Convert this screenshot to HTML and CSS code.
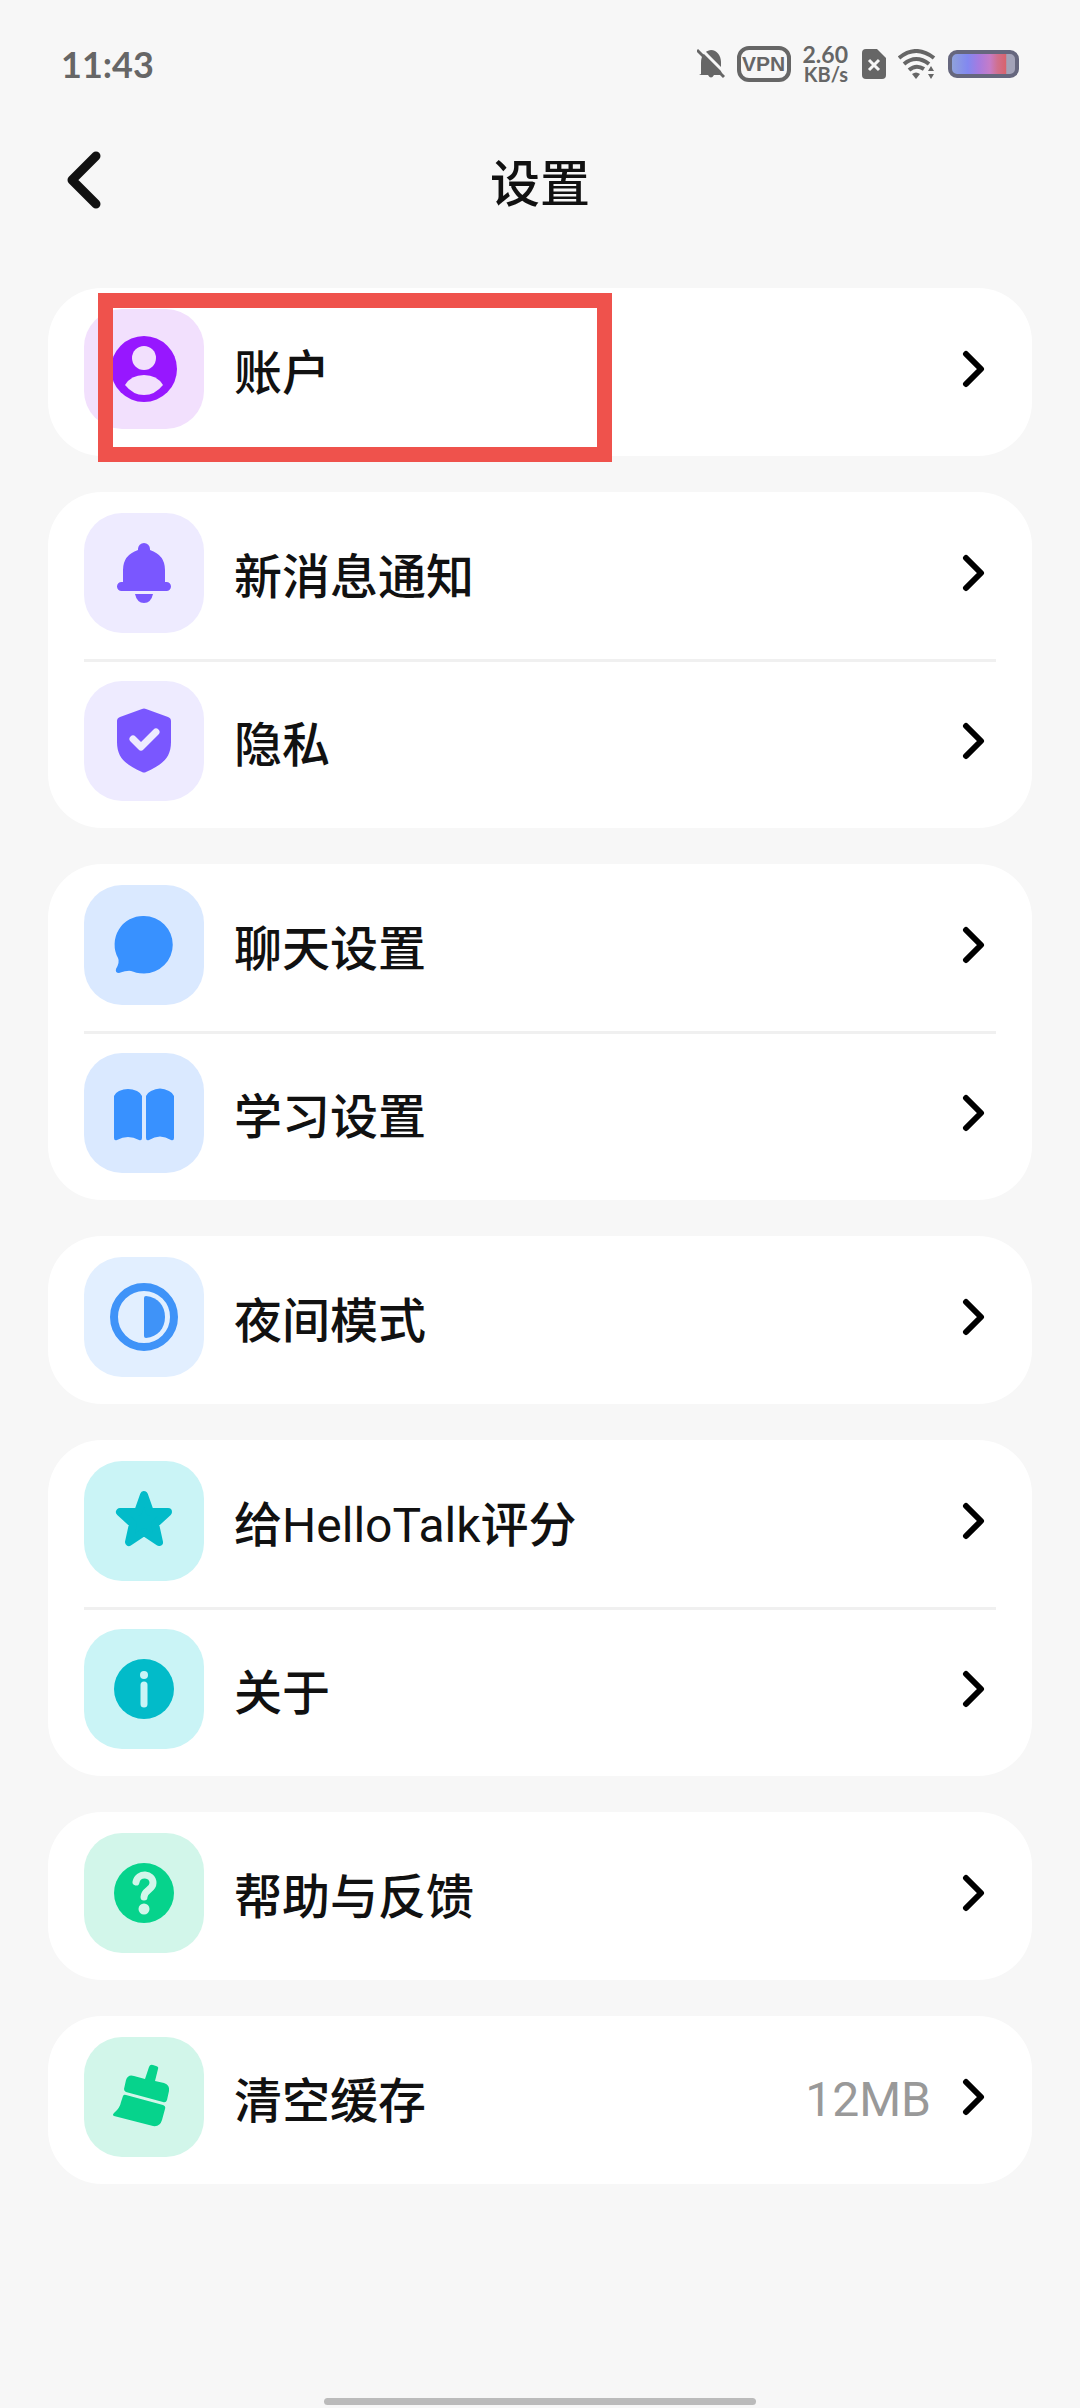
FILE: index.html
```html
<!DOCTYPE html>
<html lang="zh-CN">
<head>
  <meta charset="UTF-8">
  <meta name="viewport" content="width=device-width, initial-scale=1.0">
  <title>设置</title>
  <link rel="stylesheet" href="styles.css">
</head>
<body>
  <div class="status-bar">
    <span class="time">11:43</span>
    <div class="status-icons">
      <svg width="28" height="32" viewBox="0 0 28 32">
        <path d="M4 26V15C4 7 8 3 14 2C20 2 24 8 24 14V22L25 27H17Q14 32 11 27H2Z" fill="#666"/>
        <path d="M2 -1L29 26" stroke="#f7f7f7" stroke-width="3"/>
        <path d="M0 2L27 29" stroke="#666" stroke-width="3"/>
      </svg>
      <span class="vpn">VPN</span>
      <div class="speed"><span class="speed-value">2.60</span><span class="speed-unit">KB/s</span></div>
      <svg width="24" height="30" viewBox="0 0 24 30">
        <path d="M4 0H15L24 9V26Q24 30 20 30H4Q0 30 0 26V4Q0 0 4 0Z" fill="#666"/>
        <path d="M7 11L17 21M17 11L7 21" stroke="#f7f7f7" stroke-width="3"/>
      </svg>
      <svg width="38" height="30" viewBox="0 0 38 30">
        <path d="M1 9Q18 -5 36 9M6 15Q18 5 31 15M11 21Q18 15 26 20" fill="none" stroke="#666" stroke-width="4"/>
        <path d="M14 25Q18 22 22 25L18 30Z" fill="#666"/>
        <path d="M30 22L33 17L36 22ZM30 25L33 30L36 25Z" fill="#666"/>
      </svg>
      <span class="battery"></span>
    </div>
  </div>

  <header class="header">
    <button class="back" type="button" aria-label="返回">
      <svg width="36" height="60" viewBox="0 0 36 60"><path d="M30 6L6 30L30 54" fill="none" stroke="#111" stroke-width="9" stroke-linecap="round" stroke-linejoin="round"/></svg>
    </button>
    <h1>设置</h1>
  </header>

  <main class="settings">
    <section class="card">
      <a class="row" href="#account">
        <svg class="icon violet" viewBox="0 0 120 120">
          <circle cx="60" cy="60" r="33"/>
          <circle class="cut" cx="60" cy="49" r="12"/>
          <path class="cut" d="M41 76Q47 66 60 66Q73 66 79 76Q71 86 60 86Q49 86 41 76Z"/>
        </svg>
        <span class="label">账户</span>
        <svg class="arrow" viewBox="0 0 24 40"><path d="M5 5L20 20L5 35"/></svg>
      </a>
      <div class="highlight"></div>
    </section>

    <section class="card">
      <a class="row" href="#notifications">
        <svg class="icon purple" viewBox="0 0 120 120">
          <path d="M54 37V36A6 6 0 0 1 66 36V37Q81 42 81 57V69H82.500A4.500 4.500 0 0 1 82.500 78H37.500A4.500 4.500 0 0 1 37.500 69H39V57Q39 42 54 37Z"/>
          <path d="M51 81H69Q67 90 60 90Q53 90 51 81Z"/>
        </svg>
        <span class="label">新消息通知</span>
        <svg class="arrow" viewBox="0 0 24 40"><path d="M5 5L20 20L5 35"/></svg>
      </a>
      <hr>
      <a class="row" href="#privacy">
        <svg class="icon purple" viewBox="0 0 120 120">
          <path d="M58 28Q60 27 62 28L84 36Q87 37 87 40V61C87 78 77 84 62 91Q60 92 58 91C43 84 33 78 33 61V40Q33 37 36 36Z"/>
          <path class="cut-line" d="M49 58L57 66L72 51"/>
        </svg>
        <span class="label">隐私</span>
        <svg class="arrow" viewBox="0 0 24 40"><path d="M5 5L20 20L5 35"/></svg>
      </a>
    </section>

    <section class="card">
      <a class="row" href="#chat">
        <svg class="icon blue" viewBox="0 0 120 120">
          <path d="M60 31A28.500 28.500 0 1 1 60 88.500C54 88.500 50 87 47 86Q44 85 35 88Q31 88 32 84Q36 77 34 73A28.500 28.500 0 0 1 60 31Z"/>
        </svg>
        <span class="label">聊天设置</span>
        <svg class="arrow" viewBox="0 0 24 40"><path d="M5 5L20 20L5 35"/></svg>
      </a>
      <hr>
      <a class="row" href="#study">
        <svg class="icon blue" viewBox="0 0 120 120">
          <path d="M30 43Q31 40 35 38Q44 34 53 38Q57 40 58 43V85Q58 88 55 87Q44 81 33 87Q30 88 30 85Z"/>
          <path d="M62 43Q63 40 67 38Q76 33 85 38Q89 40 90 43V85Q90 88 87 87Q76 80 65 87Q62 88 62 85Z"/>
        </svg>
        <span class="label">学习设置</span>
        <svg class="arrow" viewBox="0 0 24 40"><path d="M5 5L20 20L5 35"/></svg>
      </a>
    </section>

    <section class="card">
      <a class="row" href="#night">
        <svg class="icon sky" viewBox="0 0 120 120">
          <circle class="ring" cx="60" cy="60" r="30"/>
          <path d="M60 41Q60 39 62 39C74 40 81 49 81 60S74 80 62 81Q60 81 60 79Z"/>
        </svg>
        <span class="label">夜间模式</span>
        <svg class="arrow" viewBox="0 0 24 40"><path d="M5 5L20 20L5 35"/></svg>
      </a>
    </section>

    <section class="card">
      <a class="row" href="#rate">
        <svg class="icon teal" viewBox="0 0 120 120">
          <path class="rounded" d="M60 34L66 51H84L71 63L75 81L60 71L45 81L49 63L36 51H54Z"/>
        </svg>
        <span class="label">给<span class="latin">HelloTalk</span>评分</span>
        <svg class="arrow" viewBox="0 0 24 40"><path d="M5 5L20 20L5 35"/></svg>
      </a>
      <hr>
      <a class="row" href="#about">
        <svg class="icon teal" viewBox="0 0 120 120">
          <circle cx="60" cy="60" r="30"/>
          <circle class="cut" cx="60" cy="46" r="4"/>
          <path class="cut-line" d="M60 56V75"/>
        </svg>
        <span class="label">关于</span>
        <svg class="arrow" viewBox="0 0 24 40"><path d="M5 5L20 20L5 35"/></svg>
      </a>
    </section>

    <section class="card">
      <a class="row" href="#help">
        <svg class="icon green" viewBox="0 0 120 120">
          <circle cx="60" cy="60" r="30"/>
          <path class="cut-line" d="M52 49C54 39 69 40 69 50C69 57 60 57 60 64"/>
          <circle class="cut" cx="60" cy="76" r="5.500"/>
        </svg>
        <span class="label">帮助与反馈</span>
        <svg class="arrow" viewBox="0 0 24 40"><path d="M5 5L20 20L5 35"/></svg>
      </a>
    </section>

    <section class="card">
      <a class="row" href="#cache">
        <svg class="icon green" viewBox="0 0 120 120">
          <path d="M65 30Q66 27 69 28L72 29Q75 30 74 32L71 44L80 46Q86 48 85 54L83 63Q82 66 79 65L42 55Q40 54 40 52L42 43Q44 37 50 39L61 42Z"/>
          <path d="M39 59Q40 57 42 58L79 68Q82 69 81 72L78 83Q76 90 69 89L30 79Q28 78 30 76Q36 71 37 65Z"/>
        </svg>
        <span class="label">清空缓存</span>
        <span class="value">12MB</span>
        <svg class="arrow" viewBox="0 0 24 40"><path d="M5 5L20 20L5 35"/></svg>
      </a>
    </section>
  </main>

  <div class="home-indicator"></div>
</body>
</html>
```

FILE: styles.css
```css
* {
  box-sizing: border-box;
}
body {
  display: flex;
  flex-direction: column;
  min-height: 100vh;
  margin: 0;
  background-color: #f7f7f7;
  color: #111;
  font-family: Roboto, "Noto Sans CJK SC", sans-serif;
}

/* status bar */
.status-bar {
  display: flex;
  justify-content: space-between;
  align-items: center;
  height: 128px;
  padding: 0 61px;
  color: #666;
  font-family: Lato, sans-serif;
  font-weight: bold;
}
.time {
  font-size: 36px;
}
.status-icons {
  display: flex;
  align-items: center;
  gap: 12px;
}
.vpn {
  width: 54px;
  height: 36px;
  border: 4px solid #666;
  border-radius: 12px;
  font-family: "Liberation Sans", sans-serif;
  font-size: 21px;
  line-height: 28px;
  text-align: center;
}
.speed {
  display: flex;
  flex-direction: column;
  align-items: flex-end;
  margin-right: 2px;
  line-height: 20px;
}
.speed-value {
  font-size: 23px;
}
.speed-unit {
  font-size: 20px;
}
.battery {
  width: 71px;
  height: 28px;
  border: 4px solid #66677e;
  border-radius: 9px;
  background: linear-gradient(to right, #8fa2dc, #8288f0 25%, #a57be0 42%, #c57cc8 60%, #d0708e 72%, #d8646e 85%, #a3a3b8 87%);
}

/* header */
.header {
  display: grid;
  grid-template-columns: 96px 1fr 96px;
  align-items: center;
  height: 104px;
  padding: 0 36px;
}
.back {
  display: flex;
  justify-content: center;
  padding: 0;
  border: 0;
  background: none;
  cursor: pointer;
}
h1 {
  margin: 0;
  font-size: 50px;
  font-weight: 500;
  text-align: center;
}

/* list */
.settings {
  display: flex;
  flex-direction: column;
  gap: 36px;
  padding: 56px 48px;
}
.card {
  position: relative;
  border-radius: 54px;
  background-color: #fff;
}
.card hr {
  height: 3px;
  margin: -1px 36px -2px;
  border: 0;
  background-color: #f0f0f0;
}
.row {
  display: flex;
  align-items: center;
  padding: 21px 47px 27px 36px;
  color: inherit;
  font-size: 48px;
  text-decoration: none;
}
.label {
  flex: 1;
  margin-left: 30px;
  font-weight: 500;
}
.latin {
  font-weight: 400;
}
.value {
  margin-right: 30px;
  padding-top: 4px;
  color: #999;
}
.arrow {
  width: 24px;
  height: 40px;
  fill: none;
  stroke: #000;
  stroke-width: 6;
  stroke-linecap: round;
  stroke-linejoin: round;
}
.highlight {
  position: absolute;
  top: 5px;
  left: 50px;
  width: 514px;
  height: 169px;
  border: 15px solid #ef524c;
  pointer-events: none;
}

/* icons */
.icon {
  width: 120px;
  height: 120px;
  border-radius: 38px;
  background-color: var(--tile);
  fill: var(--tint);
}
.cut {
  fill: var(--tile);
}
.cut-line {
  fill: none;
  stroke: var(--tile);
  stroke-width: 7;
  stroke-linecap: round;
  stroke-linejoin: round;
}
.ring {
  fill: none;
  stroke: var(--tint);
  stroke-width: 8;
}
.rounded {
  stroke: var(--tint);
  stroke-width: 8;
  stroke-linejoin: round;
}
.violet {
  --tile: #f2e0fd;
  --tint: #9717ff;
}
.purple {
  --tile: #eeebff;
  --tint: #7a57ff;
}
.blue {
  --tile: #dae9ff;
  --tint: #3891ff;
}
.sky {
  --tile: #e2efff;
  --tint: #3f93f8;
}
.teal {
  --tile: #caf4f6;
  --tint: #02bbc9;
}
.green {
  --tile: #d2f6ea;
  --tint: #06d38c;
}

.home-indicator {
  width: 40%;
  height: 7px;
  margin: auto auto 3px;
  border-radius: 4px;
  background-color: #bbb;
}
```
